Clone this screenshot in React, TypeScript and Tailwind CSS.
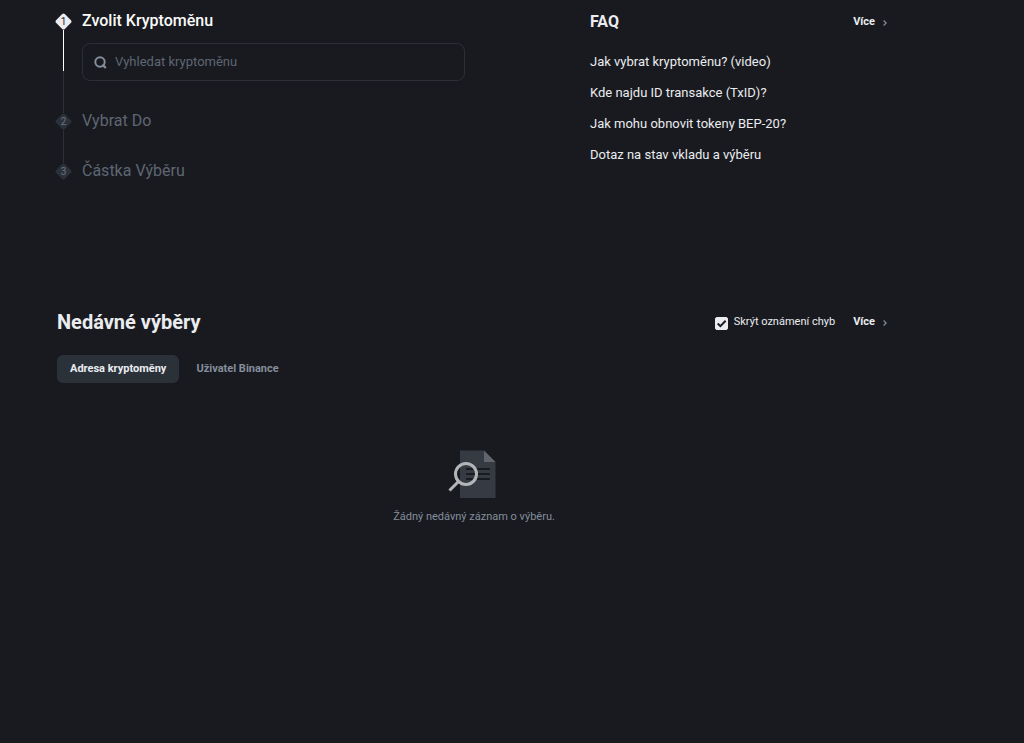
import { useState } from 'react';

const faqs = [
    'Jak vybrat kryptoměnu? (video)',
    'Kde najdu ID transakce (TxID)?',
    'Jak mohu obnovit tokeny BEP-20?',
    'Dotaz na stav vkladu a výběru',
];

const tabs = ['Adresa kryptoměny', 'Uživatel Binance'];

function StepMarker({ step, active = false }: { step: number; active?: boolean }) {
    return (
        <svg width="17" height="17" viewBox="0 0 17 17" className="shrink-0" aria-hidden="true">
            <path
                d="M7.2 1Q8.5 -.1 9.8 1L16 7.2Q17 8.5 16 9.8L9.8 16Q8.5 17.1 7.2 16L1 9.8Q0 8.5 1 7.2Z"
                fill={active ? '#eaecef' : '#2b3139'}
            />
            <text
                x="8.5"
                y="12"
                textAnchor="middle"
                fontSize="10"
                fill={active ? '#1e2026' : '#6b7482'}
            >
                {step}
            </text>
        </svg>
    );
}

function MoreLink() {
    return (
        <a href="#" className="flex items-center gap-2 text-[11px] font-bold leading-4 text-[#eaecef]">
            Více
            <svg width="4" height="6" viewBox="0 0 4 6" className="mt-0.5" aria-hidden="true">
                <path d="M.6.5 3.2 3 .6 5.5" fill="none" stroke="#848e9c" strokeWidth="1.2" />
            </svg>
        </a>
    );
}

function Steps() {
    return (
        <ol className="-ml-0.5 mt-[5px] text-base leading-4">
            <li className="flex gap-2.5">
                <div className="flex w-[17px] flex-col">
                    <StepMarker step={1} active />
                    <span className="ml-2 h-[41px] w-px bg-white" />
                    <span className="ml-2 w-px flex-1 bg-[#2b3139]" />
                </div>
                <div className="flex-1 pb-8">
                    <h2 className="font-medium text-[#fafafa]">Zvolit Kryptoměnu</h2>
                    <div className="mt-3.5 flex h-[38px] items-center gap-2 rounded-lg border border-[#2b2f36] px-[11px]">
                        <svg width="13" height="13" viewBox="0 0 13 13" className="shrink-0" aria-hidden="true">
                            <circle cx="6" cy="6" r="4.7" fill="none" stroke="#848e9c" strokeWidth="2" />
                            <path d="M8.4 8.6 11.8 12" stroke="#848e9c" strokeWidth="2.2" />
                        </svg>
                        <input
                            type="text"
                            aria-label="Vyhledat kryptoměnu"
                            placeholder="Vyhledat kryptoměnu"
                            className="min-w-0 flex-1 bg-transparent text-[13px] text-[#eaecef] outline-none placeholder:text-[#5e6673]"
                        />
                    </div>
                </div>
            </li>
            <li className="flex gap-2.5">
                <div className="flex w-[17px] flex-col">
                    <StepMarker step={2} />
                    <span className="ml-2 w-px flex-1 bg-[#2b3139]" />
                </div>
                <h2 className="pb-[34px] text-[#5e6673]">Vybrat Do</h2>
            </li>
            <li className="flex gap-2.5">
                <StepMarker step={3} />
                <h2 className="text-[#5e6673]">Částka Výběru</h2>
            </li>
        </ol>
    );
}

function Faq() {
    return (
        <section className="pt-0.5">
            <div className="flex items-center justify-between pr-1">
                <h2 className="text-base font-bold leading-6 text-[#eaecef]">FAQ</h2>
                <MoreLink />
            </div>
            <ul className="mt-[18px] flex flex-col gap-[11px] text-[13px] leading-5 text-[#eaecef]">
                {faqs.map((faq) => (
                    <li key={faq}>
                        <a href="#">{faq}</a>
                    </li>
                ))}
            </ul>
        </section>
    );
}

function EmptyState() {
    return (
        <div className="flex flex-col items-center pt-[67px]">
            <svg width="48" height="48" viewBox="0 0 48 48" className="-ml-1" aria-hidden="true">
                <path d="M12 .5H36L47.5 12V48H12Z" fill="#363a42" />
                <path d="M36 .5 47.5 12H36Z" fill="#62666c" />
                <path d="M18 19H42M18 24H42M18 29H42" stroke="#1a1b20" strokeWidth="2" />
                <circle cx="18" cy="24" r="10.5" fill="none" stroke="#b3b5b8" strokeWidth="3" />
                <path d="M10.5 31.5 1.5 40.5" stroke="#b3b5b8" strokeWidth="3" />
            </svg>
            <p className="mt-[11px] text-[11px] leading-4 text-[#848e9c]">Žádný nedávný záznam o výběru.</p>
        </div>
    );
}

function RecentWithdrawals() {
    const [activeTab, setActiveTab] = useState(tabs[0]);
    const [hideErrors, setHideErrors] = useState(true);

    return (
        <section className="mt-[130px]">
            <div className="flex items-center justify-between pr-1">
                <h2 className="text-xl font-bold leading-6 text-[#eaecef]">Nedávné výběry</h2>
                <div className="flex items-center gap-[18px]">
                    <label className="flex items-center gap-1.5 text-[11px] leading-4 text-[#eaecef]">
                        <span className="mt-0.5 grid size-[13px]">
                            <input
                                type="checkbox"
                                checked={hideErrors}
                                onChange={(e) => setHideErrors(e.target.checked)}
                                className="col-start-1 row-start-1 size-[13px] appearance-none rounded-xs border border-[#eaecef] checked:bg-[#eaecef]"
                            />
                            {hideErrors && (
                                <svg
                                    viewBox="0 0 12 12"
                                    className="pointer-events-none col-start-1 row-start-1 size-[13px]"
                                    aria-hidden="true"
                                >
                                    <path d="M2.5 6 5 8.5 9.8 3.5" fill="none" stroke="#1a1b20" strokeWidth="1.8" />
                                </svg>
                            )}
                        </span>
                        Skrýt oznámení chyb
                    </label>
                    <MoreLink />
                </div>
            </div>
            <div className="mt-[21px] flex gap-1 text-[11px] font-bold leading-4">
                {tabs.map((tab) => (
                    <button
                        key={tab}
                        type="button"
                        onClick={() => setActiveTab(tab)}
                        className={
                            tab === activeTab
                                ? 'h-7 rounded-md bg-[#2b3139] px-[13px] text-[#eaecef]'
                                : 'h-7 rounded-md px-[13px] text-[#848e9c]'
                        }
                    >
                        {tab}
                    </button>
                ))}
            </div>
            <EmptyState />
        </section>
    );
}

export default function App() {
    return (
        <div className="min-h-screen bg-[#191a1f] pl-[57px] pr-6 font-['Roboto','Noto_Sans',sans-serif]">
            <main className="max-w-[834px] pt-2">
                <div className="grid grid-cols-[minmax(0,1fr)_301px] gap-x-[125px]">
                    <Steps />
                    <Faq />
                </div>
                <RecentWithdrawals />
            </main>
        </div>
    );
}
